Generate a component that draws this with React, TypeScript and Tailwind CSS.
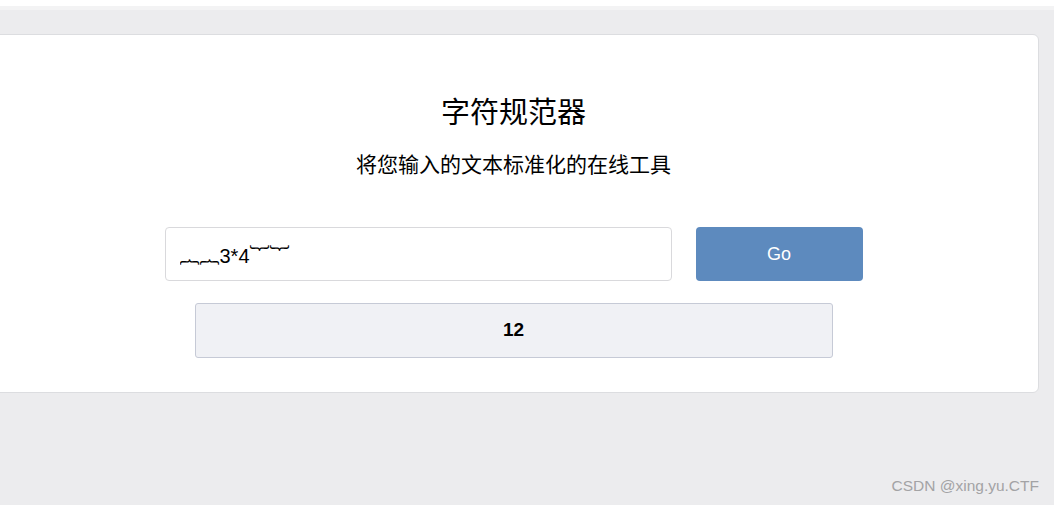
import React from 'react';

export default function App() {
  return (
    <div className="relative h-[505px] w-[1054px] overflow-hidden bg-[#ececee] font-['Liberation_Sans','Noto_Sans_CJK_SC',sans-serif]">
      {/* top strip */}
      <div className="h-[6px] bg-white" />
      <div className="h-[4px] bg-[#f3f3f4]" />

      <div className="pt-[24px]">
        <div className="ml-[-12px] flex h-[359px] w-[1051px] flex-col items-center rounded-[6px] border border-[#dcdde0] bg-white">
          <h1 className="mt-[55px] text-[29px] leading-[40px] text-black font-['Noto_Sans_CJK_SC',sans-serif]">字符规范器</h1>
          <p className="mt-[18px] text-[21px] leading-[30px] text-black font-['Noto_Sans_CJK_SC',sans-serif]">将您输入的文本标准化的在线工具</p>

          <div className="mt-[49px] flex gap-[24px]">
            <input
              type="text"
              defaultValue="︷︷3*4︸︸"
              className="h-[54px] w-[507px] rounded-[4px] border border-[#d9d9dc] px-[14px] text-[20px] text-black outline-none"
            />
            <button className="h-[54px] w-[167px] rounded-[4px] bg-[#5d8abe] text-[18px] text-white">Go</button>
          </div>

          <div className="mt-[22px] flex h-[55px] w-[638px] items-center justify-center rounded-[3px] border border-[#c6cad6] bg-[#f0f1f5] text-[19px] font-bold text-black">
            12
          </div>
        </div>
      </div>

      <span className="absolute bottom-[8px] right-[15px] text-[15.5px] text-[#a3a3a5]">CSDN @xing.yu.CTF</span>
    </div>
  );
}
